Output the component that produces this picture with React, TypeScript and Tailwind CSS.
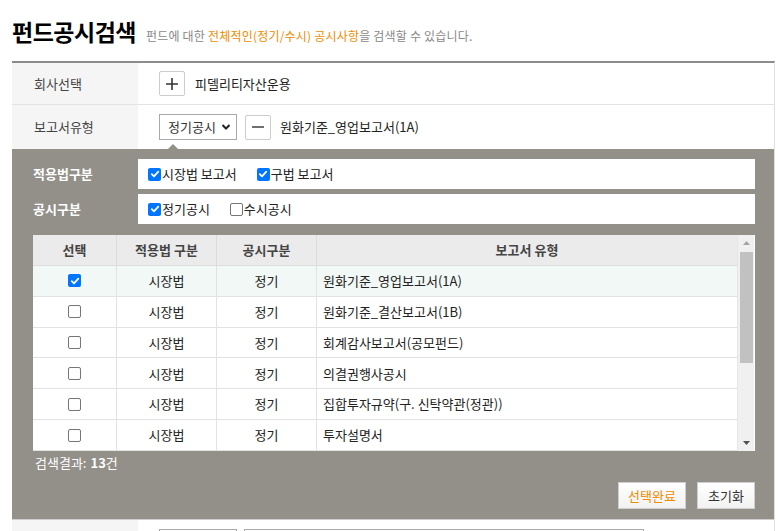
import React from "react";

const FONT = { fontFamily: '"Noto Sans CJK KR", "Noto Sans", sans-serif' };

function Check({ on }: { on: boolean }) {
  if (on)
    return (
      <span className="inline-flex w-[13px] h-[13px] rounded-[2px] bg-[#0075ff] items-center justify-center shrink-0">
        <svg width="10" height="10" viewBox="0 0 10 10">
          <path d="M1.8 5.2 L4 7.4 L8.3 2.6" stroke="white" strokeWidth="1.8" fill="none" strokeLinecap="round" strokeLinejoin="round" />
        </svg>
      </span>
    );
  return <span className="inline-block w-[13px] h-[13px] rounded-[2px] border border-[#767676] bg-white shrink-0" />;
}

const rows = [
  "원화기준_영업보고서(1A)",
  "원화기준_결산보고서(1B)",
  "회계감사보고서(공모펀드)",
  "의결권행사공시",
  "집합투자규약(구. 신탁약관(정관))",
  "투자설명서",
];

export default function App() {
  return (
    <div className="w-[782px] h-[531px] bg-white overflow-hidden text-[#222]" style={FONT}>
      <div className="flex items-end pl-[12px] pt-[8px] h-[46px]">
        <span className="text-[23px] font-bold text-black leading-[30px] tracking-[-0.5px]">펀드공시검색</span>
        <span className="ml-[10px] text-[12px] text-[#888] leading-[16px] mb-[2px] tracking-[0.2px]">
          펀드에 대한 <span className="text-[#f08c00]">전체적인(정기/수시) 공시사항</span>을 검색할 수 있습니다.
        </span>
      </div>
      <div className="ml-[12px] mt-[15px] w-[763px] border-t-2 border-[#8c8c8c] border-r border-r-[#e0e0e0]">
        <div className="flex h-[42px] border-b border-[#e3e3e3]">
          <div className="w-[126px] bg-[#f5f5f5] flex items-center pl-[22px] text-[13px] text-[#444]">회사선택</div>
          <div className="flex items-center pl-[21px] gap-[10px]">
            <span className="w-[26px] h-[25px] border border-[#ccc] rounded-[2px] bg-white flex items-center justify-center">
              <svg width="12" height="12" viewBox="0 0 12 12"><path d="M6 0v12M0 6h12" stroke="#333" strokeWidth="1.6" /></svg>
            </span>
            <span className="text-[13px] text-[#222]">피델리티자산운용</span>
          </div>
        </div>
        <div className="flex h-[44px] relative">
          <div className="w-[126px] bg-[#f5f5f5] flex items-center pl-[22px] text-[13px] text-[#444]">보고서유형</div>
          <div className="flex items-center pl-[21px]">
            <span className="w-[78px] h-[26px] border border-[#a9a9a9] bg-white flex items-center pl-[8px] text-[13px] text-[#333] gap-[5px]">
              정기공시
              <svg width="10" height="8" viewBox="0 0 10 8"><path d="M1.5 2 L5 5.5 L8.5 2" stroke="#222" strokeWidth="2" fill="none" /></svg>
            </span>
            <span className="ml-[8px] w-[26px] h-[25px] border border-[#ccc] rounded-[2px] bg-white flex items-center justify-center">
              <svg width="12" height="2" viewBox="0 0 12 2"><path d="M0 1h12" stroke="#333" strokeWidth="1.4" /></svg>
            </span>
            <span className="ml-[9px] text-[13px] text-[#222]">원화기준_영업보고서(1A)</span>
          </div>
          <span className="absolute left-[156px] bottom-0 w-0 h-0 border-l-[5px] border-r-[5px] border-b-[5px] border-l-transparent border-r-transparent border-b-[#938f89]" />
        </div>
        <div className="bg-[#938f89] pl-[21px] pr-[19px] pt-[10px] pb-[10px]">
          <div className="flex h-[30px]">
            <div className="w-[105px] flex items-center text-[13px] font-bold text-white">적용법구분</div>
            <div className="flex-1 bg-white flex items-center pl-[10px] text-[13px] text-[#222]">
              <span className="flex items-center gap-[1px]"><Check on />시장법 보고서</span>
              <span className="flex items-center gap-[1px] ml-[20px]"><Check on />구법 보고서</span>
            </div>
          </div>
          <div className="flex h-[30px] mt-[5px]">
            <div className="w-[105px] flex items-center text-[13px] font-bold text-white">공시구분</div>
            <div className="flex-1 bg-white flex items-center pl-[10px] text-[13px] text-[#222]">
              <span className="flex items-center gap-[1px]"><Check on />정기공시</span>
              <span className="flex items-center gap-[1px] ml-[20px]"><Check on={false} />수시공시</span>
            </div>
          </div>
          <div className="mt-[11px] flex h-[216px] bg-white">
            <div className="w-[704px] flex flex-col">
              <div className="flex h-[31px] bg-[#ebebeb] border-b border-[#dcdcdc] text-[13px] font-bold text-[#444]">
                <div className="w-[84px] flex items-center justify-center border-r border-[#dcdcdc]">선택</div>
                <div className="w-[100px] flex items-center justify-center border-r border-[#dcdcdc]">적용법 구분</div>
                <div className="w-[100px] flex items-center justify-center border-r border-[#dcdcdc]">공시구분</div>
                <div className="flex-1 flex items-center justify-center">보고서 유형</div>
              </div>
              {rows.map((r, i) => (
                <div key={r} className={`flex h-[31px] border-b border-[#e2e2e2] text-[13px] text-[#222] ${i === 0 ? "bg-[#f1f8f5]" : "bg-white"}`}>
                  <div className="w-[84px] flex items-center justify-center border-r border-[#e2e2e2]"><Check on={i === 0} /></div>
                  <div className="w-[100px] flex items-center justify-center border-r border-[#e2e2e2]">시장법</div>
                  <div className="w-[100px] flex items-center justify-center border-r border-[#e2e2e2]">정기</div>
                  <div className="flex-1 flex items-center pl-[6px]">{r}</div>
                </div>
              ))}
            </div>
            <div className="w-[17px] bg-[#f0f0f0] flex flex-col items-center border-l border-[#e6e6e6]">
              <svg className="mt-[6px]" width="7" height="4" viewBox="0 0 7 4"><path d="M0 4 L3.5 0 L7 4Z" fill="#a3a3a3" /></svg>
              <div className="mt-[7px] w-[13px] h-[111px] bg-[#c1c1c1]" />
              <div className="flex-1" />
              <svg className="mb-[6px]" width="7" height="4" viewBox="0 0 7 4"><path d="M0 0 L7 0 L3.5 4Z" fill="#505050" /></svg>
            </div>
          </div>
          <div className="mt-[6px] h-[12px] flex items-center text-[13px] text-white pl-[2px]">
            검색결과: <b className="ml-[4px]">13</b>건
          </div>
          <div className="flex justify-end gap-[11px] mt-[13px]">
            <span className="w-[68px] h-[27px] border border-[#cfcfcf] bg-gradient-to-b from-white to-[#f2f2f2] flex items-center justify-center text-[13px] text-[#f08c00]">선택완료</span>
            <span className="w-[58px] h-[27px] border border-[#cfcfcf] bg-gradient-to-b from-white to-[#f2f2f2] flex items-center justify-center text-[13px] text-[#333]">초기화</span>
          </div>
        </div>
        <div className="flex h-[40px] border-t border-[#cfcfcf]">
          <div className="w-[126px] bg-[#f5f5f5]" />
          <div className="flex pl-[21px] pt-[9px] gap-[7px]">
            <span className="w-[78px] h-[26px] border border-[#aaa]" />
            <span className="w-[400px] h-[26px] border border-[#aaa]" />
          </div>
        </div>
      </div>
    </div>
  );
}
